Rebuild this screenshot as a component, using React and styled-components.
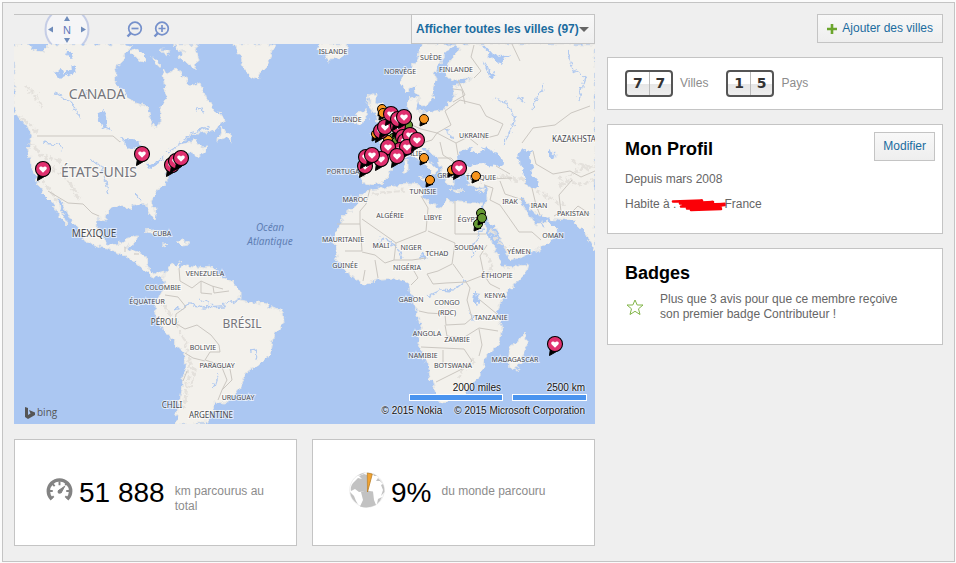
import { useState } from "react";
import { styled, createGlobalStyle } from "styled-components";

const land = [
  // north america
  "M14 44L27 44L31 49L42 52L50 44L121 44L132 46L123 57L116 71L115 83L123 91L133 102L148 107L150 118L155 127L160 123L161 107L167 96L164 83L163 70L169 73L175 68L184 76L190 86L200 83L205 95L213 107L224 120L218 128L205 132L192 134L178 146L196 139L200 148L209 147L198 157L190 152L178 162L167 173L167 182L157 190L152 200L156 213L155 223L150 215L145 204L133 205L130 208L117 206L107 211L106 219L98 218L98 228L103 238L109 245L121 243L125 238L138 235L134 243L126 247L133 252L145 255L146 266L155 273L165 271L165 277L155 277L144 270L133 260L123 255L110 250L96 246L84 240L79 231L71 219L61 201L57 200L67 225L62 220L55 208L51 202L43 194L37 180L31 166L29 150L32 135L24 123L14 112Z",
  "M129 51L138 49L146 57L144 62L136 58ZM153 57L158 60L160 65L155 65ZM160 50L170 51L167 56ZM172 44L198 44L195 50L198 60L196 70L188 64L180 58L183 52Z",
  "M233 44L275 44L271 55L267 65L262 70L258 79L249 75L242 65L239 54Z",
  "M219 133L222 126L226 132L231 134L232 142L226 138L218 141Z",
  "M145 231L154 230L169 236L158 235ZM176 241L184 240L190 244L180 245ZM162 244L167 244L165 246Z",
  // south america
  "M163 273L172 265L181 262L179 268L187 265L203 268L213 267L222 278L231 281L240 291L240 300L253 302L267 305L283 312L284 322L275 334L272 345L271 355L262 362L249 370L242 383L232 397L225 403L213 402L214 410L207 414L207 424L175 424L178 409L182 390L184 370L185 353L173 342L163 327L155 313L155 305L160 297L164 283Z",
  // iceland, british isles
  "M320 44L347 44L348 52L339 59L328 60L325 54L318 50Z",
  "M370 93L377 95L376 102L382 104L386 114L393 121L392 130L374 136L379 127L376 115L368 106ZM356 114L366 111L367 119L361 124L354 122Z",
  // europe and asia
  "M422 44L418 57L413 67L404 74L401 84L407 92L414 86L417 95L420 105L426 106L432 99L433 88L437 80L434 72L441 63L446 51L457 44L460 50L450 60L446 70L448 78L458 80L473 78L462 83L453 88L456 96L450 101L445 109L435 111L423 112L416 111L415 105L418 98L413 97L408 103L408 113L398 116L388 128L378 136L370 134L380 142L384 153L365 151L360 163L359 177L363 182L370 186L382 182L390 174L392 166L401 161L410 153L418 158L430 171L428 179L436 173L438 169L429 161L422 149L426 147L438 160L442 170L447 182L454 186L454 176L463 172L469 174L468 184L479 188L487 184L487 200L482 213L487 217L497 231L504 244L508 260L520 258L533 252L551 242L558 231L549 222L535 225L530 217L520 200L523 197L532 211L548 218L568 220L575 222L586 233L593 250L595 250L595 44Z",
  "M419 177L428 177L427 182ZM403 161L408 160L408 171L404 171ZM451 189L463 190L456 192ZM476 191L484 188L480 193Z",
  // africa
  "M370 189L382 188L410 184L422 185L423 197L429 202L440 208L447 200L460 202L473 203L483 203L480 210L485 228L491 242L497 253L504 267L514 268L529 262L527 271L512 288L501 301L497 313L501 328L500 343L486 356L484 366L478 379L463 395L445 402L437 401L432 383L426 362L418 343L421 326L416 310L411 296L409 284L396 278L380 279L363 284L344 270L337 258L334 243L337 227L344 216L357 205L361 195Z",
  "M510 347L519 341L524 332L527 345L522 359L516 371L510 368L509 357Z",
];

const water = [
  "M457 158L463 150L470 148L477 153L485 151L483 146L496 152L505 164L495 166L482 164L467 166L458 164Z",
  "M516 157L524 149L532 151L528 158L534 166L531 172L538 180L540 187L531 188L524 177L523 169Z",
  "M119 138L133 140L143 145L134 149L127 146ZM137 150L144 152L145 161L139 162ZM147 166L159 160L164 156L160 163L150 169Z",
  "M96 115L105 111L107 124L111 131L103 127ZM54 72L61 69L64 75L72 66L78 65L73 73L61 79ZM65 50L70 50L74 60L69 56Z",
  "M474 293L481 294L478 306L473 302ZM469 307L472 317L476 323L471 318ZM421 253L427 257L422 261Z",
  "M482 60L490 72L498 76L490 77ZM484 44L492 53L502 57L512 54L499 63L488 56ZM549 149L556 154L554 160L549 157Z",
];

const borders =
  "M37 136H113L120 142M48 191L68 203L83 204L92 213L99 216M125 247V252M134 254L139 254M179 268L180 281L192 288M192 288L201 281L212 286L223 289M165 295L178 297L186 307L176 314L175 323L185 329L197 325L211 335L219 345L220 352L210 352L205 360L221 365L227 380L222 390M185 353L193 358L205 361M230 369L232 380L222 390L218 400M183 381L187 371M201 281V293L212 294M213 286L214 293L229 291M370 189L366 204L360 211V224H337M360 224L362 251L345 251M362 219L392 240L396 243L426 231L428 208L421 196M455 201V234H486M428 231L455 243L452 264L438 271L427 274M396 243L394 260L385 263L375 255L362 252M394 260L412 260L426 258M410 264L418 278L411 285M375 260L378 278M365 270L363 281M427 274L433 284L446 283L466 282L470 288L467 300L472 318L465 324L446 325L445 314L428 313L419 311M466 282L484 275L490 284L500 289M484 275L480 256L487 245M453 264L463 278M480 300L497 314M445 325L447 336L463 338L479 328L498 331M421 347L464 349L472 361L462 369L446 377L436 382M443 350V365M479 329L482 345L479 356M484 185L493 188L490 200L500 205L519 232L532 232L541 240M500 181L505 194L523 200M487 179L512 178M496 166L510 174M533 151L536 164L553 174L570 171L581 177L595 171M522 143L533 128L555 125L571 113L590 106M512 44L520 61M532 188L536 205L540 215M572 180L559 195L561 212L554 216M590 214L578 206L568 216M458 80L465 95L453 102M445 111L460 100L480 105L486 116L503 124L498 135L482 139M453 89L462 90L465 104M445 111L451 125L437 133L421 129L407 123L409 112M437 133L432 140L422 143M437 133L456 143L458 155M456 143L468 137L478 145M438 158L451 158L458 165M440 142L443 155L457 164L448 171M420 143L408 148L397 145L391 133M365 155L364 177M383 154L398 159M474 45L471 57L481 71L474 78";

const rivers =
  "M568 50L573 70L585 77L582 86L578 100M494 99L507 103L514 116L511 130L503 144M543 84L538 97L535 103M534 103L532 109M483 209L479 219L482 229L478 238L472 247L473 260M176 309L190 304L204 307L222 306L240 299M199 299L210 304M374 249L382 238L395 245L402 259M427 296L440 290L453 291L466 280M166 153L179 145L191 133L209 128M199 108L204 113M196 107L197 113M218 373L213 389M250 351L258 350L256 359M54 92L72 104L80 119M80 98L90 90M43 143L59 145L62 151M88 158L101 166L106 181L109 195M134 193L141 201M447 129L452 138M518 98L526 103M536 218L544 227";

const terrain =
  "M29 143L38 151L45 157L49 167L62 174L72 187L80 199M18 115L29 124L38 132M43 180L53 195L57 202M50 157L59 161L65 172M25 85L36 96L42 108M160 300L172 318L185 340L190 360L187 385L184 410M188 360L195 370L190 388M506 176L528 182L536 190L550 198L566 205M560 187L574 172L590 165M558 178L580 185L595 180M572 160L588 170L595 163M480 180L502 176L518 181M458 379L467 365L477 360M485 252L491 265L488 279M373 194L388 192L405 190M491 230L504 248L520 252";

const labels = [
  ["CANADA", 97, 99, 14, "big"],
  ["ÉTATS-UNIS", 99, 177, 14, "big"],
  ["BRÉSIL", 242, 328, 12, "big"],
  ["MEXIQUE", 94, 237, 10],
  ["Océan", 270, 231, 10, "sea"],
  ["Atlantique", 270, 245, 10, "sea"],
  ["CUBA", 162, 236, 7],
  ["VENEZUELA", 205, 276, 7],
  ["COLOMBIE", 163, 290, 7],
  ["ÉQUATEUR", 147, 304, 7],
  ["PÉROU", 164, 325, 8],
  ["BOLIVIE", 203, 350, 7],
  ["PARAGUAY", 217, 368, 7],
  ["URUGUAY", 238, 400, 7],
  ["CHILI", 172, 408, 8],
  ["ARGENTINE", 211, 418, 8],
  ["ISLANDE", 333, 54, 7],
  ["SUÈDE", 431, 60, 7],
  ["NORVÈGE", 400, 74, 7],
  ["FINLANDE", 456, 72, 7],
  ["IRLANDE", 347, 122, 7],
  ["UKRAINE", 474, 138, 7],
  ["KAZAKHSTAN", 577, 142, 8],
  ["ITALIE", 412, 156, 7],
  ["PORTUGAL", 345, 174, 7],
  ["GRÈCE", 448, 178, 7],
  ["TURQUIE", 481, 180, 7],
  ["TUNISIE", 423, 194, 7],
  ["MAROC", 355, 202, 7],
  ["ALGÉRIE", 390, 218, 7],
  ["LIBYE", 433, 220, 7],
  ["ÉGYPTE", 470, 222, 7],
  ["IRAK", 510, 204, 7],
  ["IRAN", 539, 208, 7],
  ["PAKISTAN", 573, 216, 7],
  ["OMAN", 553, 238, 7],
  ["YÉMEN", 519, 254, 7],
  ["MAURITANIE", 343, 242, 7],
  ["MALI", 381, 248, 7],
  ["NIGER", 411, 250, 7],
  ["TCHAD", 437, 256, 7],
  ["SOUDAN", 469, 250, 7],
  ["GUINÉE", 345, 268, 7],
  ["NIGÉRIA", 407, 270, 7],
  ["ÉTHIOPIE", 497, 278, 7],
  ["GABON", 411, 302, 7],
  ["KENYA", 495, 298, 7],
  ["CONGO", 447, 305, 7],
  ["(RDC)", 447, 315, 7],
  ["TANZANIE", 491, 320, 7],
  ["ANGOLA", 427, 336, 7],
  ["ZAMBIE", 457, 342, 7],
  ["NAMIBIE", 423, 358, 7],
  ["BOTSWANA", 453, 368, 7],
  ["MADAGASCAR", 515, 362, 7],
];

const dots = [
  [382, 109, "#f7941d"],
  [383, 113, "#f7941d"],
  [376, 134, "#f7941d"],
  [408, 125, "#669933"],
  [393, 138, "#669933"],
  [396, 142, "#669933"],
  [388, 140, "#f7941d"],
  [424, 119, "#f7941d"],
  [424, 158, "#f7941d"],
  [430, 180, "#f7941d"],
  [452, 170, "#f7941d"],
  [476, 176, "#f7941d"],
  [481, 213, "#669933"],
  [478, 224, "#669933"],
  [482, 218, "#669933"],
];

const hearts = [
  [43, 169],
  [142, 154],
  [172, 165],
  [176, 161],
  [181, 158],
  [381, 131],
  [385, 127],
  [398, 126],
  [391, 114],
  [398, 119],
  [404, 117],
  [403, 137],
  [405, 141],
  [410, 135],
  [400, 150],
  [407, 147],
  [417, 140],
  [388, 147],
  [397, 156],
  [365, 166],
  [366, 157],
  [381, 159],
  [372, 155],
  [459, 168],
  [555, 344],
];

function WorldMap() {
  return (
    <MapSvg viewBox="14 44 581 380" role="img" aria-label="Carte des villes">
      <defs>
        <filter id="coast" x="0" y="0" width="100%" height="100%">
          <feTurbulence type="fractalNoise" baseFrequency="0.16" numOctaves="3" seed="4" />
          <feDisplacementMap in="SourceGraphic" scale="8" xChannelSelector="R" yChannelSelector="G" />
        </filter>
      </defs>
      <rect x="14" y="44" width="581" height="380" fill="#abc7f2" />
      <g filter="url(#coast)">
        <rect x="14" y="44" width="581" height="380" fill="none" />
        <path d={land.join("")} fill="#f3f1ec" stroke="#e6e6e4" strokeWidth="1" />
        <path d={terrain} fill="none" stroke="#e4e1dc" strokeWidth="3" strokeDasharray="5 2" />
        <path d={water.join("")} fill="#abc7f2" />
        <path d={rivers} fill="none" stroke="#b2caef" strokeWidth="1.3" />
      </g>
      <path d={borders} fill="none" stroke="#cbc7c1" strokeWidth="1" strokeLinejoin="round" />
      {labels.map(([name, x, y, size, kind]) => (
        <MapLabel key={name} x={x} y={y} $size={size} $kind={kind}>
          {name}
        </MapLabel>
      ))}
      {dots.map(([x, y, color]) => (
        <g key={`${x}-${y}`} transform={`translate(${x} ${y})`} stroke="#000">
          <path d="M-4 7L-3.5 2L3 4Z" />
          <circle r="4.5" fill={color} />
        </g>
      ))}
      {hearts.map(([x, y]) => (
        <g key={`${x}-${y}`} transform={`translate(${x} ${y})`}>
          <path d="M-5.5 11.5L-4.5 4L5 5.5Z" stroke="#000" />
          <circle r="7.5" fill="#e0316f" stroke="#000" strokeWidth="1.1" />
          <path
            d="M0 3.7L-3.3 .5C-4.5-.8-3.5-2.8-1.8-2.6Q-.6-2.5 0-1.4Q.6-2.5 1.8-2.6C3.5-2.8 4.5-.8 3.3 .5Z"
            fill="#fff"
          />
        </g>
      ))}
    </MapSvg>
  );
}

function Compass() {
  return (
    <svg width="46" height="29" viewBox="0 0 46 29" aria-hidden="true">
      <circle cx="23" cy="14.5" r="21.5" fill="#f5f5f7" stroke="#c5cde6" strokeWidth="2" />
      <g fill="#6f8cbb">
        <path d="M23 1L26 6H20ZM23 28L20 23H26ZM4 14.5L9 11.5V17.5ZM42 14.5L37 11.5V17.5Z" />
      </g>
      <text x="23" y="19" textAnchor="middle" fontSize="11" fill="#6279bb">
        N
      </text>
    </svg>
  );
}

function ZoomIcon({ plus }) {
  return (
    <svg width="17" height="17" viewBox="0 0 17 17" fill="none" stroke="#7590cb" strokeWidth="1.7">
      <circle cx="9" cy="7.5" r="6.3" />
      <path d="M5 12L1.5 15.5" strokeWidth="2.4" />
      <path d={plus ? "M5.5 7.5H12.5M9 4V11" : "M5.5 7.5H12.5"} />
    </svg>
  );
}

function Gauge() {
  return (
    <svg width="27" height="26" viewBox="0 0 28 26" fill="none" stroke="#838383" aria-hidden="true">
      <path d="M6 22.5A11.6 11.6 0 1 1 22 22.5" strokeWidth="3.6" />
      <path d="M14 4V8M3 14H7M21 14H25M6.500 6.500L9 9M21.500 6.500L20 8M5 22L8 19.500M23 22L20 19.500" strokeWidth="2" />
      <path d="M19.500 9L15.600 16.200L12.800 13.600Z" fill="#838383" strokeWidth="1" />
      <circle cx="14" cy="14.800" r="2" fill="#838383" stroke="none" />
    </svg>
  );
}

function Globe() {
  return (
    <svg width="36" height="36" viewBox="0 0 36 36" fill="#c2c2c2" aria-hidden="true">
      <circle cx="18" cy="18" r="17.300" fill="#fff" stroke="#e6e6e6" strokeWidth=".7" />
      <path d="M4 11L9 6L13 7L10 4L15 2L18 3V19L10 20L6 17L2 19Q1 15 4 11Z" />
      <path d="M12 20L17 18.500L24 19.500L25 28L27 33Q19 37 11 34.500L14 28Z" />
      <path d="M1 20L5 24L7 29L9 32Q2 28 1 20ZM29 6Q36 12 35.500 20L32 24L34 18L32 13L34 12L31 9L27 9ZM29 27L33 25Q31 30 28 32ZM24 1.500L28 4L25 4ZM8 4Q12 1 16 .5L13 2.500Z" />
      <path d="M18.300 1L23.300 2L18.500 20Z" fill="#f2a331" stroke="#b77c25" strokeWidth=".8" />
    </svg>
  );
}

function Scribble() {
  return (
    <svg width="57" height="15" viewBox="0 0 57 15" aria-hidden="true">
      <path
        d="M2 4.500L31 3.500L9 6.500L42 5L12 8L54 7L10 9.500L54 8L16 11.500L50 9.500L20 13L50 12L38 9"
        fill="none"
        stroke="#fb0007"
        strokeWidth="2.600"
        strokeLinecap="round"
        strokeLinejoin="round"
      />
    </svg>
  );
}

function Digits({ value, label }) {
  return (
    <CounterGroup>
      <Counter>
        {value.split("").map((d, idx) => (
          <Digit key={`${idx}-${d}`}>{d}</Digit>
        ))}
      </Counter>
      <Muted>{label}</Muted>
    </CounterGroup>
  );
}

function App() {
  const [filter, setFilter] = useState("all");
  return (
    <>
      <GlobalStyle />
      <Page>
        <Panel>
          <Column>
            <section>
              <MapBar>
                <MapTools>
                  <Compass />
                  <ZoomButtons>
                    <IconButton aria-label="Zoom arrière">
                      <ZoomIcon />
                    </IconButton>
                    <IconButton aria-label="Zoom avant">
                      <ZoomIcon plus />
                    </IconButton>
                  </ZoomButtons>
                </MapTools>
                <SelectBox>
                  <Select
                    aria-label="Filtrer les villes"
                    value={filter}
                    onChange={(e) => setFilter(e.target.value)}
                  >
                    <option value="all">Afficher toutes les villes (97)</option>
                  </Select>
                </SelectBox>
              </MapBar>
              <MapArea>
                <WorldMap />
                <Bing>
                  <svg width="10" height="12" viewBox="0 0 10 12" fill="#555" aria-hidden="true">
                    <path d="M0 0L3 1V8L5.500 6.500L4 3L10 5.500V8L3 12L0 10Z" />
                  </svg>
                  bing
                </Bing>
                <MapFooter>
                  <Scales>
                    <Scale $width={94}>2000 miles</Scale>
                    <Scale $width={75}>2500 km</Scale>
                  </Scales>
                  <Credits>
                    <span>© 2015 Nokia</span>
                    <span>© 2015 Microsoft Corporation</span>
                  </Credits>
                </MapFooter>
              </MapArea>
            </section>
            <Stats>
              <Stat>
                <Gauge />
                <StatValue>51 888</StatValue>
                <StatLabel>km parcourus au total</StatLabel>
              </Stat>
              <Stat>
                <Globe />
                <StatValue>9%</StatValue>
                <StatLabel>du monde parcouru</StatLabel>
              </Stat>
            </Stats>
          </Column>
          <Side>
            <AddButton>
              <svg width="10" height="10" viewBox="0 0 10 10" aria-hidden="true">
                <path d="M5 0V10M0 5H10" stroke="#6ba52c" strokeWidth="2.600" />
              </svg>
              Ajouter des villes
            </AddButton>
            <Counters>
              <Digits value="77" label="Villes" />
              <Digits value="15" label="Pays" />
            </Counters>
            <ProfileCard>
              <CardHeader>
                <Title>Mon Profil</Title>
                <Button>Modifier</Button>
              </CardHeader>
              <Info>Depuis mars 2008</Info>
              <Info>
                Habite à :
                <Redacted>
                  <Scribble />
                </Redacted>
                France
              </Info>
            </ProfileCard>
            <BadgeCard>
              <Title>Badges</Title>
              <BadgeRow>
                <svg width="18" height="17" viewBox="0 0 18 17" aria-hidden="true">
                  <path
                    d="M9 1L11.200 6H17L12.500 9.800L14 15.500L9 12.300L4 15.500L5.500 9.800L1 6H6.800Z"
                    fill="#fff"
                    stroke="#82b548"
                  />
                </svg>
                <p>Plus que 3 avis pour que ce membre reçoive son premier badge Contributeur !</p>
              </BadgeRow>
            </BadgeCard>
          </Side>
        </Panel>
      </Page>
    </>
  );
}

const GlobalStyle = createGlobalStyle`
  * {
    box-sizing: border-box;
  }
  body {
    margin: 0;
    background-color: #fbfbfb;
    font-family: "Liberation Sans", Arial, sans-serif;
    font-size: 12px;
    line-height: 15px;
    color: #666;
  }
  svg {
    display: block;
    flex-shrink: 0;
  }
  button,
  select {
    font: inherit;
    cursor: pointer;
  }
  h2,
  p {
    margin: 0;
  }
`;

const line = "1px solid #c4c4c4";

const Page = styled.main`
  padding: 2px 1px 1px 2px;
`;

const Panel = styled.div`
  display: grid;
  grid-template-columns: minmax(0, 581fr) minmax(0, 336fr);
  gap: 12px;
  align-items: start;
  padding: 11px 11px 15px;
  border: ${line};
  background-color: #efefef;
`;

const Column = styled.div`
  display: flex;
  flex-direction: column;
  gap: 15px;
`;

const Side = styled.aside`
  display: flex;
  flex-direction: column;
  gap: 14px;
`;

const MapBar = styled.div`
  display: flex;
  justify-content: space-between;
  height: 30px;
  border-top: ${line};
`;

const MapTools = styled.div`
  display: flex;
  align-items: center;
  gap: 36px;
  padding-left: 30px;
`;

const ZoomButtons = styled.div`
  display: flex;
  gap: 10px;
`;

const IconButton = styled.button`
  padding: 0;
  border: 0;
  background: none;
`;

const SelectBox = styled.div`
  position: relative;
  &::after {
    content: "";
    position: absolute;
    top: 12px;
    right: 6px;
    border: 5px solid transparent;
    border-top-color: #666;
    border-bottom: 0;
    pointer-events: none;
  }
`;

const Select = styled.select`
  appearance: none;
  width: 184px;
  height: 100%;
  padding: 0 4px;
  border: ${line};
  border-top: 0;
  border-radius: 0;
  background: linear-gradient(#f8f8f8, #efefef);
  color: #1b6c9f;
  font-weight: 700;
`;

const MapArea = styled.div`
  position: relative;
`;

const MapSvg = styled.svg`
  width: 100%;
  height: auto;
  overflow: hidden;
`;

const MapLabel = styled.text`
  font-family: "Noto Sans", "Open Sans", sans-serif;
  font-size: ${({ $size }) => $size}px;
  font-style: ${({ $kind }) => ($kind === "sea" ? "italic" : "normal")};
  text-anchor: middle;
  fill: ${({ $kind }) => ($kind === "sea" ? "#5f7fb4" : $kind === "big" ? "#75757b" : "#48494f")};
  stroke: ${({ $kind }) => ($kind === "sea" ? "none" : "rgba(255, 255, 255, 0.6)")};
  stroke-width: 2px;
  paint-order: stroke;
`;

const Bing = styled.div`
  position: absolute;
  left: 11px;
  bottom: 4px;
  display: flex;
  align-items: center;
  gap: 2px;
  color: #555;
  font-family: "Open Sans", sans-serif;
  font-size: 10px;
`;

const MapFooter = styled.div`
  position: absolute;
  right: 8px;
  bottom: 6px;
  display: flex;
  flex-direction: column;
  align-items: flex-end;
  gap: 2px;
  color: #111;
  font-size: 10px;
  text-shadow: 0 0 2px #fff, 0 0 2px #fff;
`;

const Scales = styled.div`
  display: flex;
  gap: 9px;
  line-height: 13px;
`;

const Scale = styled.div`
  width: ${({ $width }) => $width}px;
  padding-right: 2px;
  text-align: right;
  &::after {
    content: "";
    display: block;
    height: 5px;
    margin-right: -2px;
    border: 1px solid #fff;
    background-color: #4a94ef;
  }
`;

const Credits = styled.div`
  display: flex;
  gap: 12px;
  padding-right: 2px;
`;

const Stats = styled.div`
  display: grid;
  grid-template-columns: 1fr 1fr;
  gap: 15px;
`;

const Card = styled.section`
  border: ${line};
  background-color: #fff;
`;

const Stat = styled(Card)`
  display: flex;
  align-items: center;
  gap: 6px;
  min-height: 107px;
  padding: 0 20px 6px 31px;
  &:last-child {
    padding-left: 36px;
  }
`;

const StatValue = styled.span`
  padding-top: 6px;
  color: #000;
  font-size: 28px;
  line-height: 32px;
  white-space: nowrap;
`;

const StatLabel = styled.span`
  min-height: 30px;
  margin: 18px 0 0 4px;
  color: #8c8c8c;
`;

const Button = styled.button`
  display: flex;
  align-items: center;
  gap: 5px;
  height: 29px;
  padding: 0 8px;
  border: ${line};
  background: linear-gradient(#f8f8f8, #eee);
  color: #1b6c9f;
`;

const AddButton = styled(Button)`
  align-self: flex-end;
  padding: 0 9px;
`;

const Counters = styled(Card)`
  display: flex;
  gap: 18px;
  padding: 12px 17px;
`;

const CounterGroup = styled.div`
  display: flex;
  align-items: center;
  gap: 7px;
`;

const Counter = styled.div`
  display: flex;
  width: 48px;
  height: 27px;
  border: 2px solid #555;
  border-radius: 4px;
  background: linear-gradient(#fff 50%, #e6e6e6 51%, #eee);
`;

const Digit = styled.span`
  flex: 1;
  color: #333;
  font-family: "DejaVu Sans", sans-serif;
  font-size: 14px;
  font-weight: 700;
  line-height: 23px;
  text-align: center;
  & + & {
    border-left: 1px solid #bbb;
  }
`;

const Muted = styled.span`
  color: #8c8c8c;
`;

const ProfileCard = styled(Card)`
  min-height: 110px;
  padding: 7px 7px 11px 17px;
`;

const CardHeader = styled.div`
  display: flex;
  justify-content: space-between;
  margin-bottom: 6px;
`;

const Title = styled.h2`
  color: #000;
  font-size: 18px;
  line-height: 34px;
`;

const Info = styled.p`
  display: flex;
  margin-bottom: 10px;
`;

const Redacted = styled.span`
  width: 48px;
  svg {
    margin: 0 -5px;
  }
`;

const BadgeCard = styled(Card)`
  min-height: 97px;
  padding: 7px 27px 7px 17px;
`;

const BadgeRow = styled.div`
  display: flex;
  align-items: center;
  gap: 16px;
  padding: 2px 0 0 1px;
`;

export default App;
